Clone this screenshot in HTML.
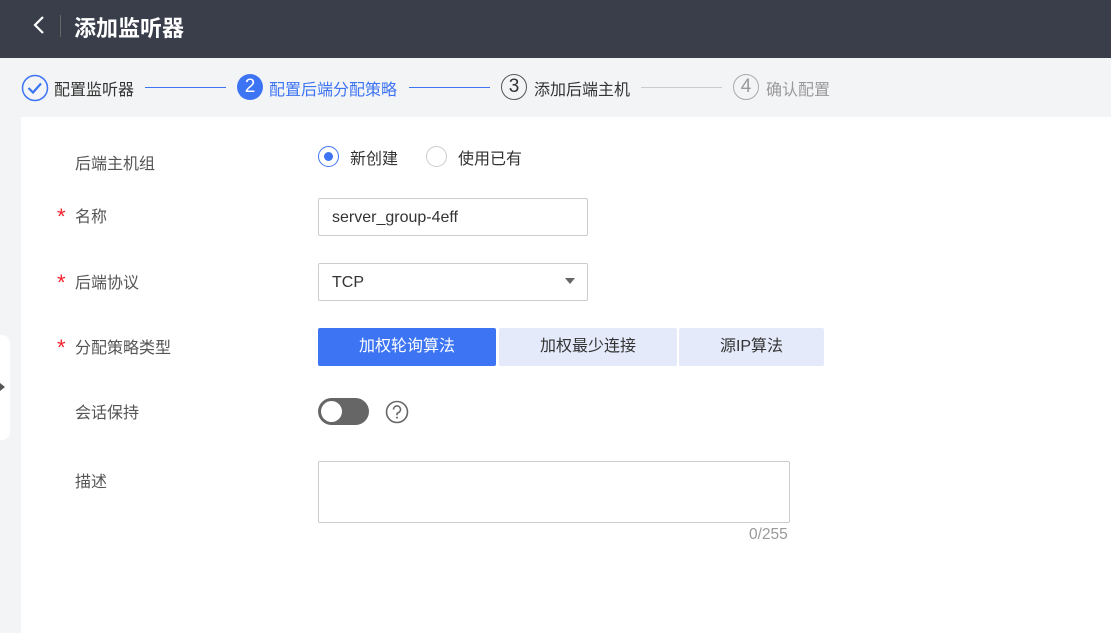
<!DOCTYPE html>
<html><head><meta charset="utf-8"><style>
*{margin:0;padding:0;box-sizing:border-box}
body{width:1111px;height:633px;background:#f3f4f6;font-family:"Liberation Sans","Noto Sans CJK SC",sans-serif;position:relative;overflow:hidden;color:#333}
.a{position:absolute}
.hdr{left:0;top:0;width:1111px;height:58px;background:#3a3e4b}
.lbl{font-size:16px;color:#555}
.star{color:#f5222d;font-size:22px}
.inp{border:1px solid #ccc;border-radius:2px;background:#fff;font-size:16px;color:#333;padding-left:13px;line-height:37px;height:38px;width:270px}
.circ{width:26px;height:26px;border-radius:50%;text-align:center;line-height:24px;font-size:19px}
.st{font-size:16px;top:76px}
.line{height:1px;top:87px}
.btn{top:328px;height:38px;line-height:38px;text-align:center;font-size:16px;border-radius:2px}
</style></head><body>
<div class="a hdr"></div>
<svg class="a" style="left:32px;top:15px" width="14" height="20"><path d="M11 2 L3 10 L11 18" stroke="#fff" stroke-width="2.2" fill="none"/></svg>
<div class="a" style="left:60px;top:15px;width:1px;height:22px;background:#666"></div>
<div class="a" style="left:74px;top:11px;font-size:22px;font-weight:bold;color:#fff">添加监听器</div>

<svg class="a" style="left:21px;top:74px" width="28" height="28"><circle cx="14" cy="14" r="12.5" stroke="#3d74f4" stroke-width="1.5" fill="none"/><path d="M7.5 14 L12 18.5 L20 9.5" stroke="#3d74f4" stroke-width="2.2" fill="none"/></svg>
<div class="a st" style="left:54px;color:#333">配置监听器</div>
<div class="a line" style="left:145px;width:81px;background:#3d74f4"></div>
<div class="a circ" style="left:237px;top:74px;background:#3d74f4;color:#fff;line-height:26px">2</div>
<div class="a st" style="left:269px;color:#3d74f4">配置后端分配策略</div>
<div class="a line" style="left:409px;width:81px;background:#3d74f4"></div>
<div class="a circ" style="left:501px;top:74px;border:1px solid #555;color:#333">3</div>
<div class="a st" style="left:534px;color:#333">添加后端主机</div>
<div class="a line" style="left:641px;width:81px;background:#ccc"></div>
<div class="a circ" style="left:733px;top:74px;border:1px solid #aaa;color:#999">4</div>
<div class="a st" style="left:766px;color:#999">确认配置</div>

<div class="a" style="left:21px;top:117px;width:1090px;height:516px;background:#fff"></div>
<div class="a" style="left:0;top:335px;width:10px;height:105px;background:#fff;border-radius:0 8px 8px 0"></div>
<div class="a" style="left:0;top:383px;width:0;height:0;border-top:4px solid transparent;border-bottom:4px solid transparent;border-left:5px solid #555"></div>

<div class="a lbl" style="left:75px;top:150px">后端主机组</div>
<div class="a" style="left:318px;top:146px;width:21px;height:21px;border:1px solid #3d74f4;border-radius:50%"><div style="margin:5px;width:9px;height:9px;border-radius:50%;background:#3d74f4"></div></div>
<div class="a" style="left:350px;top:145px;font-size:16px">新创建</div>
<div class="a" style="left:426px;top:146px;width:21px;height:21px;border:1px solid #ccc;border-radius:50%"></div>
<div class="a" style="left:458px;top:145px;font-size:16px">使用已有</div>

<div class="a star" style="left:57px;top:204px">*</div>
<div class="a lbl" style="left:75px;top:203px">名称</div>
<div class="a inp" style="left:318px;top:198px">server_group-4eff</div>

<div class="a star" style="left:57px;top:270px">*</div>
<div class="a lbl" style="left:75px;top:269px">后端协议</div>
<div class="a inp" style="left:318px;top:263px">TCP</div>
<div class="a" style="left:565px;top:278px;border-left:5px solid transparent;border-right:5px solid transparent;border-top:6px solid #666"></div>

<div class="a star" style="left:57px;top:335px">*</div>
<div class="a lbl" style="left:75px;top:334px">分配策略类型</div>
<div class="a btn" style="left:318px;width:178px;background:#3d74f4;color:#fff">加权轮询算法</div>
<div class="a btn" style="left:499px;width:178px;background:#e4eafa;color:#333">加权最少连接</div>
<div class="a btn" style="left:679px;width:145px;background:#e4eafa;color:#333">源IP算法</div>

<div class="a lbl" style="left:75px;top:399px">会话保持</div>
<div class="a" style="left:318px;top:398px;width:51px;height:27px;border-radius:14px;background:#666"><div style="margin:3px;width:21px;height:21px;border-radius:50%;background:#fff"></div></div>
<svg class="a" style="left:385px;top:400px" width="24" height="24"><circle cx="12" cy="12" r="10.5" stroke="#666" stroke-width="1.6" fill="none"/><path d="M8.5 9.5a3.5 3.5 0 1 1 4.5 3.3c-.7.3-1 .8-1 1.5v1" stroke="#666" stroke-width="1.6" fill="none"/><circle cx="12" cy="17.6" r="1" fill="#666"/></svg>

<div class="a lbl" style="left:75px;top:468px">描述</div>
<div class="a" style="left:318px;top:461px;width:472px;height:62px;border:1px solid #ccc;border-radius:2px"></div>
<div class="a" style="left:749px;top:526px;font-size:15.5px;color:#999">0/255</div>
</body></html>
